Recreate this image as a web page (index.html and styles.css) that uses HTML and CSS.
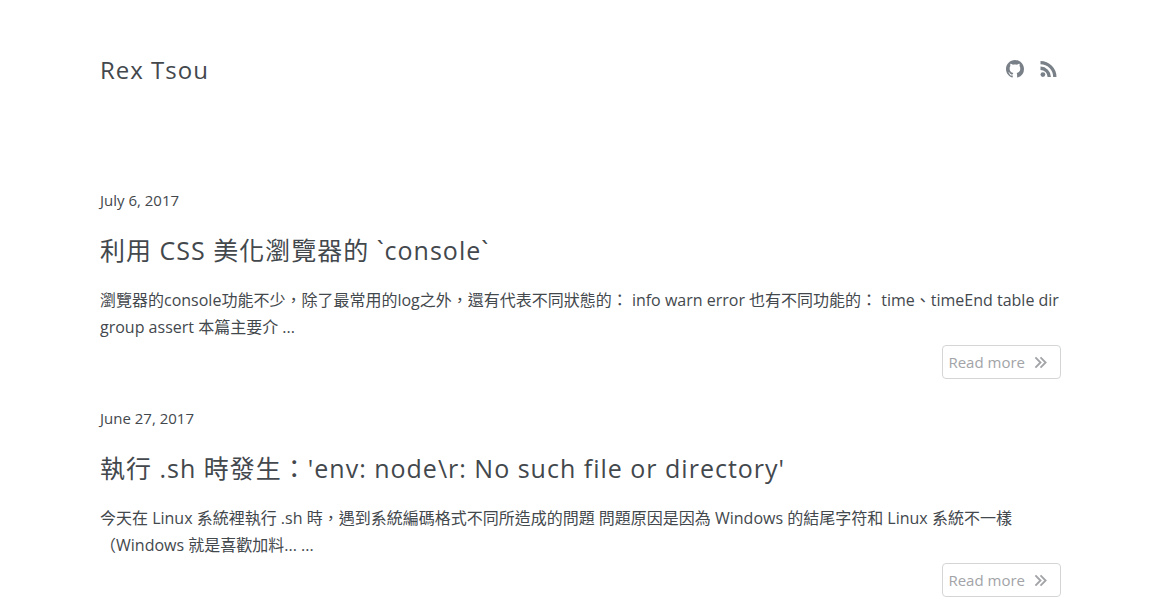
FILE: index.html
```html
<!DOCTYPE html>
<html lang="zh-Hant">
<head>
<meta charset="utf-8">
<meta name="viewport" content="width=device-width, initial-scale=1">
<title>Rex Tsou</title>
<link rel="stylesheet" href="styles.css">
</head>
<body>
<div class="container">
  <header class="site-header">
    <h1 class="site-title"><a href="#">Rex Tsou</a></h1>
    <nav class="social">
      <a href="#" aria-label="GitHub">
        <svg class="icon" viewBox="0 0 16 16" aria-hidden="true"><path d="M8 0C3.58 0 0 3.58 0 8c0 3.54 2.29 6.53 5.47 7.59.4.07.55-.17.55-.38 0-.19-.01-.82-.01-1.49-2.01.37-2.53-.49-2.69-.94-.09-.23-.48-.94-.82-1.13-.28-.15-.68-.52-.01-.53.63-.01 1.08.58 1.23.82.72 1.21 1.87.87 2.33.66.07-.52.28-.87.51-1.07-.9-.2-3.3-.6-3.3-3.7 0-1.100.1-1.800.7-2.400-.2-.6-.3-1.400 0-2.100 0 0 .9-.1 2.200.8 1.100-.2 2.500-.2 3.600 0 1.300-.9 2.200-.8 2.200-.8.3.7.2 1.500 0 2.100.6.6.7 1.300.7 2.400 0 3.100-2.300 3.500-3.300 3.700.29.25.54.73.54 1.480 0 1.070-.01 1.930-.01 2.200 0 .21.15.46.55.38A8.010 8.010 0 0 0 16 8c0-4.420-3.580-8-8-8z"/></svg>
      </a>
      <a href="#" aria-label="RSS feed">
        <svg class="icon" viewBox="0 0 18 18" aria-hidden="true"><circle cx="2.9" cy="14.6" r="2.4"/><path d="M.5 6.600v3.300a7.100 7.100 0 0 1 7.100 7.100h3.300A10.400 10.400 0 0 0 .5 6.600z"/><path d="M.5 1v3.300A12.700 12.700 0 0 1 13.200 17h3.300A16 16 0 0 0 .5 1z"/></svg>
      </a>
    </nav>
  </header>
  <main class="posts">
    <article class="post">
      <time class="post-date" datetime="2017-07-06">July 6, 2017</time>
      <h2 class="post-title"><a href="#">利用 CSS 美化瀏覽器的 `console`</a></h2>
      <p class="excerpt">瀏覽器的console功能不少，除了最常用的log之外，還有代表不同狀態的： info warn error 也有不同功能的： time、timeEnd table dir group assert 本篇主要介 ...</p>
      <a class="read-more" href="#">Read more
        <svg class="chevrons" viewBox="0 0 14 14" aria-hidden="true"><path d="M1.500 1.500 7 7l-5.500 5.500M7 1.500 12.500 7 7 12.500"/></svg>
      </a>
    </article>
    <article class="post">
      <time class="post-date" datetime="2017-06-27">June 27, 2017</time>
      <h2 class="post-title"><a href="#">執行 .sh 時發生：'env: node\r: No such file or directory'</a></h2>
      <p class="excerpt">今天在 Linux 系統裡執行 .sh 時，遇到系統編碼格式不同所造成的問題 問題原因是因為 Windows 的結尾字符和 Linux 系統不一樣（Windows 就是喜歡加料... ...</p>
      <a class="read-more" href="#">Read more
        <svg class="chevrons" viewBox="0 0 14 14" aria-hidden="true"><path d="M1.500 1.500 7 7l-5.500 5.500M7 1.500 12.500 7 7 12.500"/></svg>
      </a>
    </article>
  </main>
</div>
</body>
</html>
```
FILE: styles.css
```css
* {
  box-sizing: border-box;
}

body {
  margin: 0;
  background: #fff;
  color: #43484d;
  font-family: "Open Sans", "Noto Sans CJK TC", sans-serif;
  font-size: 15px;
  line-height: 27px;
}

a {
  color: inherit;
  text-decoration: none;
}

.container {
  max-width: 1000px;
  margin: 0 auto;
  padding: 0 22px 0 17px;
}

.site-header {
  display: flex;
  align-items: center;
  justify-content: space-between;
  padding: 54px 3px 101px 0;
}

.site-title,
.post-title {
  margin: 0;
  font-weight: 400;
  line-height: 32px;
  letter-spacing: 1px;
}

.site-title {
  font-size: 24px;
}

.social {
  display: flex;
  gap: 16px;
  padding-bottom: 2px;
  color: #7a8088;
}

.social a {
  display: flex;
}

.icon {
  width: 18px;
  height: 18px;
  fill: currentColor;
}

.post {
  display: flex;
  flex-direction: column;
  margin-bottom: 26px;
}

.post-title {
  margin: 20px 0 21px;
  font-size: 25px;
}

.excerpt {
  margin: 0;
  font-size: 16px;
}

.read-more {
  display: flex;
  align-items: center;
  align-self: flex-end;
  gap: 9px;
  margin-top: 4px;
  padding: 3px 13px 2px 5px;
  border: 1px solid #d3d5d7;
  border-radius: 4px;
  color: #a2a4a7;
}

.chevrons {
  width: 13px;
  height: 13px;
  fill: none;
  stroke: currentColor;
  stroke-width: 2;
}
```
